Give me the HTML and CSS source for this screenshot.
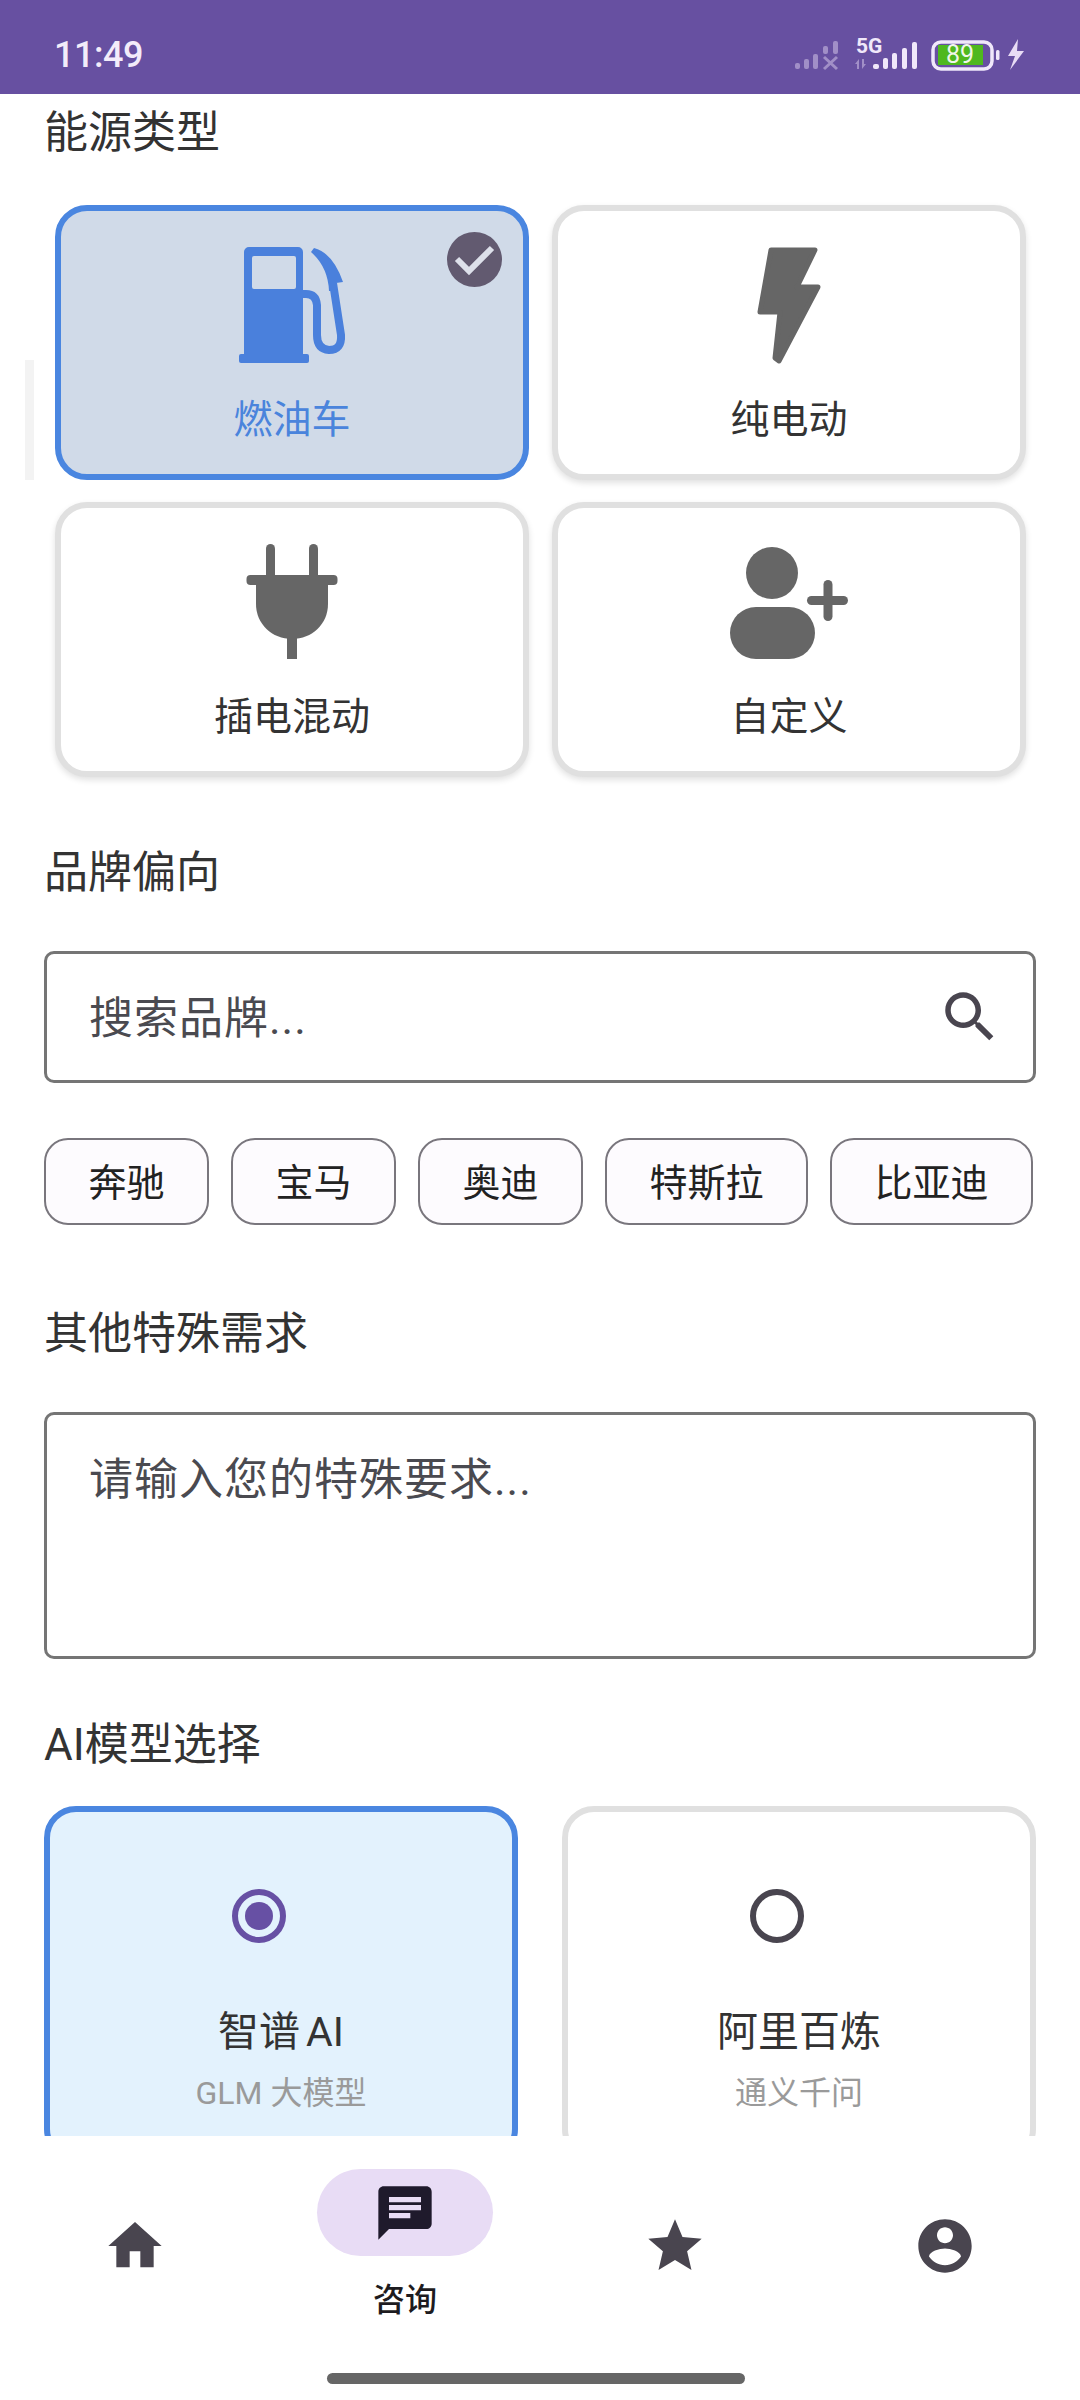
FILE: index.html
```html
<!DOCTYPE html>
<html lang="zh-CN">
<head>
    <meta charset="UTF-8">
    <meta name="viewport" content="width=device-width, initial-scale=1.0">
    <title>咨询</title>
    <link rel="stylesheet" href="styles.css">
</head>
<body>
    <header class="status-bar">
        <span class="status-time">11:49</span>
        <svg class="status-icons" viewBox="0 0 240 48" width="240" height="48">
            <g fill="#e8dcf5" opacity="0.45">
                <rect x="5" y="32" width="5" height="6" rx="2"/>
                <rect x="14" y="28" width="5" height="10" rx="2"/>
                <rect x="23" y="23" width="5" height="15" rx="2"/>
                <rect x="33" y="15" width="5" height="8" rx="2"/>
                <rect x="43" y="10" width="5" height="13" rx="2"/>
                <path d="M34 26l13 12M47 26L34 38" stroke="#e8dcf5" stroke-width="3" fill="none"/>
                <path d="M65 33l4-5v10h-2v-5zM72 28h2v5h2l-4 5z"/>
            </g>
            <text class="status-5g" x="66" y="22">5G</text>
            <g fill="#f0e8fa">
                <rect x="83" y="33" width="6" height="5" rx="2"/>
                <rect x="93" y="27" width="5" height="11" rx="2"/>
                <rect x="102" y="22" width="5" height="16" rx="2"/>
                <rect x="112" y="17" width="5" height="21" rx="2"/>
                <rect x="122" y="11" width="5" height="27" rx="2"/>
            </g>
            <rect x="143" y="11" width="59" height="27" rx="8" fill="none" stroke="#f0e8fa" stroke-width="3.5"/>
            <rect x="148" y="14" width="45" height="20" fill="#4fb81f"/>
            <text class="status-battery" x="170" y="32">89</text>
            <rect x="206" y="19" width="3.5" height="10" rx="1.5" fill="#f0e8fa"/>
            <path d="M228 8l-10 17h7l-5 14 14-19h-7z" fill="#e8dcf5"/>
        </svg>
    </header>

    <main class="content">
        <div class="scroll-mark"></div>

        <section class="energy">
            <h2 class="title">能源类型</h2>
            <div class="energy-grid">
                <div class="energy-card selected">
                    <span class="check-badge">
                        <svg viewBox="0 0 55 55" width="55" height="55">
                            <path d="M10 27l12 12L45 16" fill="none" stroke="#dde0ea" stroke-width="6"/>
                        </svg>
                    </span>
                    <svg class="energy-icon" viewBox="0 0 120 120">
                        <path fill-rule="evenodd" d="M17 2h49a5 5 0 0 1 5 5v102H12V7a5 5 0 0 1 5-5zM22 11a2 2 0 0 0-2 2v29a2 2 0 0 0 2 2h40a2 2 0 0 0 2-2V13a2 2 0 0 0-2-2z"/>
                        <rect x="7" y="109" width="70" height="9" rx="2"/>
                        <path class="hose" d="M70 49h4q10 0 11 11v30q0 14 12 15 13 0 12-15-3-20-8-52"/>
                        <path d="M79 7l3-4q19 5 29 34l-7 1 1 8-8 0q-1-24-18-39z"/>
                    </svg>
                    <span class="energy-label">燃油车</span>
                </div>
                <div class="energy-card">
                    <svg class="energy-icon" viewBox="0 0 120 120">
                        <path d="M42 5h44L68 42h21L50 116l-4-3 5-46H31z" stroke="#666" stroke-width="5" stroke-linejoin="round"/>
                    </svg>
                    <span class="energy-label">纯电动</span>
                </div>
                <div class="energy-card">
                    <svg class="energy-icon" viewBox="0 0 120 120">
                        <rect x="34" y="2" width="9" height="36" rx="4.5"/>
                        <rect x="77" y="2" width="9" height="36" rx="4.5"/>
                        <rect x="14.5" y="33" width="91" height="10" rx="4"/>
                        <path d="M24 40h72v22c0 20-16 35-36 35S24 82 24 62z"/>
                        <rect x="55" y="95" width="10" height="22"/>
                    </svg>
                    <span class="energy-label">插电混动</span>
                </div>
                <div class="energy-card">
                    <svg class="energy-icon" viewBox="0 0 120 120">
                        <ellipse cx="43" cy="31" rx="26" ry="26"/>
                        <rect x="1" y="65" width="85" height="52" rx="26"/>
                        <rect x="78" y="54" width="41" height="9" rx="4.5"/>
                        <rect x="94.5" y="38" width="9" height="41" rx="4.5"/>
                    </svg>
                    <span class="energy-label">自定义</span>
                </div>
            </div>
        </section>

        <section class="brand">
            <h2 class="title">品牌偏向</h2>
            <div class="search-box">
                <span class="hint">搜索品牌...</span>
                <svg viewBox="0 0 24 24" width="66" height="66" fill="#49454f">
                    <path d="M15.5 14h-.79l-.28-.27C15.41 12.59 16 11.11 16 9.5 16 5.91 13.09 3 9.5 3S3 5.91 3 9.5 5.91 16 9.5 16c1.61 0 3.09-.59 4.23-1.57l.27.28v.79l5 4.99L20.49 19l-4.99-5zm-6 0C7.01 14 5 11.99 5 9.5S7.01 5 9.5 5 14 7.01 14 9.5 11.99 14 9.5 14z"/>
                </svg>
            </div>
            <div class="chips">
                <span class="chip">奔驰</span>
                <span class="chip">宝马</span>
                <span class="chip">奥迪</span>
                <span class="chip">特斯拉</span>
                <span class="chip">比亚迪</span>
            </div>
        </section>

        <section class="special">
            <h2 class="title">其他特殊需求</h2>
            <div class="text-box">
                <span class="hint">请输入您的特殊要求...</span>
            </div>
        </section>

        <section class="models">
            <h2 class="title">AI模型选择</h2>
            <div class="model-grid">
                <div class="model-card selected">
                    <span class="radio"></span>
                    <span class="model-name">智谱 AI</span>
                    <span class="model-desc">GLM 大模型</span>
                </div>
                <div class="model-card">
                    <span class="radio"></span>
                    <span class="model-name">阿里百炼</span>
                    <span class="model-desc">通义千问</span>
                </div>
            </div>
        </section>
    </main>

    <nav class="bottom-nav">
        <div class="nav-items">
            <div class="nav-item">
                <svg viewBox="0 0 24 24" width="64" height="64" fill="#49454f">
                    <path d="M10 20v-6h4v6h5v-8h3L12 3 2 12h3v8z"/>
                </svg>
            </div>
            <div class="nav-item active">
                <span class="nav-pill">
                    <svg viewBox="0 0 24 24" width="64" height="64" fill="#1f1a2c">
                        <path d="M20 2H4c-1.1 0-1.99.9-1.99 2L2 22l4-4h14c1.1 0 2-.9 2-2V4c0-1.1-.9-2-2-2zM6 9h12v2H6V9zm8 5H6v-2h8v2zm4-6H6V6h12v2z"/>
                    </svg>
                </span>
                <span class="nav-label">咨询</span>
            </div>
            <div class="nav-item">
                <svg viewBox="0 0 24 24" width="64" height="64" fill="#49454f">
                    <path d="M12 17.27L18.18 21l-1.64-7.03L22 9.24l-7.19-.61L12 2 9.19 8.63 2 9.24l5.46 4.73L5.82 21z"/>
                </svg>
            </div>
            <div class="nav-item">
                <svg viewBox="0 0 24 24" width="64" height="64" fill="#49454f">
                    <path d="M12 2C6.48 2 2 6.48 2 12s4.48 10 10 10 10-4.48 10-10S17.52 2 12 2zm0 3c1.66 0 3 1.34 3 3s-1.34 3-3 3-3-1.34-3-3 1.34-3 3-3zm0 14.2c-2.5 0-4.71-1.28-6-3.22.03-1.99 4-3.08 6-3.08 1.99 0 5.97 1.09 6 3.08-1.29 1.94-3.5 3.22-6 3.22z"/>
                </svg>
            </div>
        </div>
        <div class="home-bar"></div>
    </nav>
</body>
</html>
```

FILE: styles.css
```css
body {
    margin: 0;
    width: 1080px;
    height: 2400px;
    display: flex;
    flex-direction: column;
    overflow: hidden;
    background-color: #fff;
    color: #333;
    font-family: Roboto, "Noto Sans CJK SC", sans-serif;
}

.status-bar {
    height: 94px;
    flex-shrink: 0;
    display: flex;
    justify-content: space-between;
    align-items: center;
    box-sizing: border-box;
    padding: 16px 50px 0 54px;
    background-color: #6750a1;
    color: #f3ecfa;
}
.status-time {
    font-size: 36px;
    font-weight: 500;
    letter-spacing: -0.5px;
}
.status-icons text {
    font-family: Roboto, sans-serif;
}
.status-5g {
    font-size: 21px;
    font-weight: 700;
    fill: #f0e8fa;
}
.status-battery {
    font-size: 25px;
    text-anchor: middle;
    fill: #f0f6ea;
}

.content {
    position: relative;
    flex: 1;
    min-height: 0;
    overflow: hidden;
    box-sizing: border-box;
    padding: 9px 44px 0;
}
.scroll-mark {
    position: absolute;
    left: 25px;
    top: 266px;
    width: 9px;
    height: 120px;
    background-color: #f3f3f3;
}

.title {
    margin: 0 0 48px;
    font-size: 44px;
    line-height: 60px;
    font-weight: 400;
}
.energy .title {
    margin-bottom: 42px;
}
.models .title {
    margin-bottom: 31px;
}

.energy-grid {
    display: grid;
    grid-template-columns: 1fr 1fr;
    column-gap: 23px;
    row-gap: 22px;
    padding: 0 10px 0 11px;
}
.energy-card {
    position: relative;
    height: 275px;
    box-sizing: border-box;
    display: flex;
    flex-direction: column;
    align-items: center;
    padding-top: 34px;
    background-color: #fff;
    border: 6px solid #e0e0e0;
    border-radius: 32px;
    box-shadow: 0 3px 6px rgba(0, 0, 0, 0.12);
    color: #666;
}
.energy-card.selected {
    background-color: #d0dae8;
    border-color: #4a86e0;
    box-shadow: none;
    color: #4a80dc;
}
.energy-icon {
    width: 120px;
    height: 120px;
    fill: currentColor;
}
.hose {
    fill: none;
    stroke: currentColor;
    stroke-width: 8;
}
.energy-label {
    margin-top: 30px;
    font-size: 39px;
    line-height: 50px;
    color: #333;
}
.selected .energy-label {
    color: #4a84dc;
}
.check-badge {
    position: absolute;
    top: 21px;
    right: 21px;
    width: 55px;
    height: 55px;
    border-radius: 50%;
    background-color: #625a70;
}
.check-badge svg {
    display: block;
}

.brand {
    margin-top: 66px;
}
.search-box {
    height: 132px;
    box-sizing: border-box;
    display: flex;
    justify-content: space-between;
    align-items: center;
    padding: 0 30px 0 42px;
    border: 3px solid #757575;
    border-radius: 10px;
}
.search-box .hint {
    padding-top: 4px;
}
.hint {
    font-size: 44px;
    line-height: 60px;
    letter-spacing: 1px;
    color: #4a4a50;
}
.chips {
    display: flex;
    gap: 22px;
    margin-top: 55px;
}
.chip {
    height: 87px;
    box-sizing: border-box;
    flex-shrink: 0;
    display: flex;
    align-items: center;
    padding: 0 42.5px 4px;
    font-size: 38px;
    white-space: nowrap;
    color: #222;
    background-color: #fdfbfe;
    border: 2px solid #79767d;
    border-radius: 24px;
}

.special {
    margin-top: 79px;
}
.text-box {
    height: 247px;
    box-sizing: border-box;
    padding: 35px 42px 0;
    border: 3px solid #757575;
    border-radius: 10px;
}

.models {
    margin-top: 56px;
}
.model-grid {
    display: grid;
    grid-template-columns: 1fr 1fr;
    column-gap: 44px;
}
.model-card {
    box-sizing: border-box;
    display: flex;
    flex-direction: column;
    align-items: center;
    padding: 77px 0 40px;
    background-color: #fff;
    border: 6px solid #e0e0e0;
    border-radius: 32px;
}
.model-card.selected {
    background-color: #e3f2fd;
    border-color: #4a86e0;
}
.radio {
    position: relative;
    width: 54px;
    height: 54px;
    box-sizing: border-box;
    margin-right: 44px;
    border: 6px solid #49454f;
    border-radius: 50%;
}
.selected .radio {
    border-color: #6750a4;
}
.selected .radio::after {
    content: "";
    position: absolute;
    top: 7px;
    left: 7px;
    width: 28px;
    height: 28px;
    border-radius: 50%;
    background-color: #6750a4;
}
.model-name {
    margin-top: 64px;
    font-size: 41px;
    line-height: 50px;
    word-spacing: -4px;
    color: #333;
}
.model-desc {
    margin-top: 14px;
    font-size: 32px;
    line-height: 44px;
    color: #9a9a9a;
}

.bottom-nav {
    height: 264px;
    flex-shrink: 0;
    display: flex;
    flex-direction: column;
    background-color: #fff;
}
.nav-items {
    display: flex;
    height: 237px;
}
.nav-item {
    flex: 1;
    display: flex;
    flex-direction: column;
    align-items: center;
    padding-top: 78px;
}
.nav-item.active {
    padding-top: 33px;
}
.nav-item svg {
    display: block;
}
.nav-pill {
    width: 176px;
    height: 87px;
    display: flex;
    justify-content: center;
    align-items: center;
    border-radius: 44px;
    background-color: #e8dcf5;
}
.nav-label {
    margin-top: 23px;
    font-size: 32px;
    line-height: 42px;
    font-weight: 500;
    color: #1d1b20;
}
.home-bar {
    width: 418px;
    height: 11px;
    margin-left: 327px;
    border-radius: 6px;
    background-color: #666;
}
```
